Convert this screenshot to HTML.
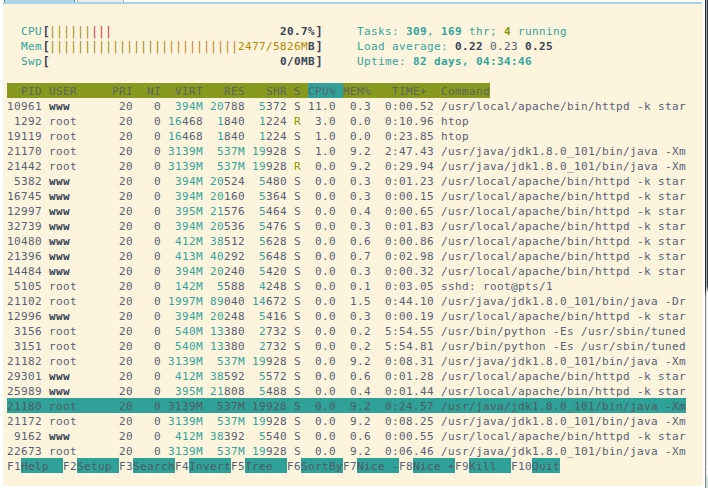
<!DOCTYPE html>
<html><head><meta charset="utf-8"><title>htop</title><style>
html,body{margin:0;padding:0;background:#fff;}
body{width:708px;height:488px;position:relative;overflow:hidden;}
#term{position:absolute;left:3px;top:4px;width:700px;height:481.5px;background:#fcf4dd;}
.ln{position:absolute;left:7px;height:15px;line-height:17px;white-space:pre;
 font-family:"DejaVu Sans Mono","Liberation Mono",monospace;font-size:11px;letter-spacing:0.3774px;color:#556275;
 font-kerning:none;font-variant-ligatures:none;}
.ln span{display:inline-block;height:15px;vertical-align:top;}
.c{color:#33a59c} .g{color:#859900} .y{color:#b58900}
.b{color:#384658;font-weight:bold}
.k{transform:translate(0.75px,1px) scale(1.1,1.05);transform-origin:50% 14px}
.cb{color:#33a59c;font-weight:bold} .gb{color:#859900;font-weight:bold}
.bg,.br,.by{position:relative;left:0.25px;transform:translateY(0.25px) scaleY(1.1);transform-origin:50% 9px}
.bg{color:#988812} .br{color:#d8302c} .by{color:#c07c21}
.hd{background:#87991f;color:#60645a} .hs{background:#2fa198;color:#566470}
.sel{background:#2fa198;color:#4e5c66}
.fk{background:#2fa198;color:#4e5c66}
#t1{position:absolute;left:5px;top:0;width:69px;height:2px;background:#add8e6}
#t1a{position:absolute;left:4px;top:0;width:1px;height:2px;background:#6688ba}
#t1b{position:absolute;left:74px;top:0;width:1px;height:2px;background:#5b82b8}
#t2{position:absolute;left:77px;top:0;width:47px;height:2px;background:#ececec;border-left:1px solid #aaa;border-right:1px solid #aaa;box-sizing:border-box}
#strip{position:absolute;left:3px;top:2px;width:699px;height:2px;background:#a9d6e7}
#rb1{position:absolute;left:705px;top:0;width:1px;height:488px;background:linear-gradient(to bottom,#20242c 0,#20242c 290px,#868686 297px)}
#rb1b{position:absolute;left:706px;top:0;width:1px;height:488px;background:linear-gradient(to bottom,#a0a5ae 0,#a0a5ae 286px,#e2e2e2 293px)}
#rb2{position:absolute;left:707px;top:0;width:1px;height:488px;background:linear-gradient(to bottom,#3a4450 0,#3a4450 286px,#fff 293px)}
#rb3{position:absolute;left:706px;top:471px;width:2px;height:17px;background:linear-gradient(to bottom,rgba(255,255,255,1) 0,rgba(255,255,255,0) 45%),linear-gradient(to right,#b4d4c8,#e4f2ec)}
</style></head>
<body>
<div id="t1"></div><div id="t1a"></div><div id="t1b"></div><div id="t2"></div><div id="strip"></div>
<div id="term"></div>
<div id="rb1"></div><div id="rb1b"></div><div id="rb2"></div><div id="rb3"></div>
<div class="ln" style="top:8px"></div>
<div class="ln" style="top:23px">  <span class="c">CPU</span><span class="b k">[</span><span class="bg">||||||</span><span class="br">|||</span>                        <span class="b">20.7%</span><span class="b k">]</span>     <span class="c">Tasks: </span><span class="cb">309</span><span class="c">, </span><span class="cb">169</span><span class="c"> thr; </span><span class="gb">4</span><span class="c"> running</span></div>
<div class="ln" style="top:38px">  <span class="c">Mem</span><span class="b k">[</span><span class="bg">|||||||||||||||||</span><span class="by">||||||||||</span><span class="y">2477/5826M</span><span class="b">B</span><span class="b k">]</span>     <span class="c">Load average: </span><span class="b">0.22</span> 0.23 <span class="b">0.25</span></div>
<div class="ln" style="top:53px">  <span class="c">Swp</span><span class="b k">[</span>                                 <span class="b">0/0MB</span><span class="b k">]</span>     <span class="c">Uptime: </span><span class="cb">82 days, 04:34:46</span></div>
<div class="ln" style="top:68px"></div>
<div class="ln" style="top:83px"><span class="hd">  PID USER     PRI  NI  VIRT   RES   SHR S <span class="hs">CPU% </span>MEM%   TIME+  Command</span></div>
<div class="ln" style="top:98px">10961 <span class="b">www</span>       20   0  <span class="c">394M</span> <span class="c">20</span>788  <span class="c">5</span>372 S 11.0  0.3  0:00.52 /usr/local/apache/bin/httpd -k star</div>
<div class="ln" style="top:113px"> 1292 root      20   0 <span class="c">16</span>468  <span class="c">1</span>840  <span class="c">1</span>224 <span class="g">R</span>  3.0  0.0  0:10.96 htop</div>
<div class="ln" style="top:128px">19119 root      20   0 <span class="c">16</span>468  <span class="c">1</span>840  <span class="c">1</span>224 S  1.0  0.0  0:23.85 htop</div>
<div class="ln" style="top:143px">21170 root      20   0 <span class="c">3139M</span>  <span class="c">537M</span> <span class="c">19</span>928 S  1.0  9.2  2:47.43 /usr/java/jdk1.8.0_101/bin/java -Xm</div>
<div class="ln" style="top:158px">21442 root      20   0 <span class="c">3139M</span>  <span class="c">537M</span> <span class="c">19</span>928 <span class="g">R</span>  0.0  9.2  0:29.94 /usr/java/jdk1.8.0_101/bin/java -Xm</div>
<div class="ln" style="top:173px"> 5382 <span class="b">www</span>       20   0  <span class="c">394M</span> <span class="c">20</span>524  <span class="c">5</span>480 S  0.0  0.3  0:01.23 /usr/local/apache/bin/httpd -k star</div>
<div class="ln" style="top:188px">16745 <span class="b">www</span>       20   0  <span class="c">394M</span> <span class="c">20</span>160  <span class="c">5</span>364 S  0.0  0.3  0:00.15 /usr/local/apache/bin/httpd -k star</div>
<div class="ln" style="top:203px">12997 <span class="b">www</span>       20   0  <span class="c">395M</span> <span class="c">21</span>576  <span class="c">5</span>464 S  0.0  0.4  0:00.65 /usr/local/apache/bin/httpd -k star</div>
<div class="ln" style="top:218px">32739 <span class="b">www</span>       20   0  <span class="c">394M</span> <span class="c">20</span>536  <span class="c">5</span>476 S  0.0  0.3  0:01.83 /usr/local/apache/bin/httpd -k star</div>
<div class="ln" style="top:233px">10480 <span class="b">www</span>       20   0  <span class="c">412M</span> <span class="c">38</span>512  <span class="c">5</span>628 S  0.0  0.6  0:00.86 /usr/local/apache/bin/httpd -k star</div>
<div class="ln" style="top:248px">21396 <span class="b">www</span>       20   0  <span class="c">413M</span> <span class="c">40</span>292  <span class="c">5</span>648 S  0.0  0.7  0:02.98 /usr/local/apache/bin/httpd -k star</div>
<div class="ln" style="top:263px">14484 <span class="b">www</span>       20   0  <span class="c">394M</span> <span class="c">20</span>240  <span class="c">5</span>420 S  0.0  0.3  0:00.32 /usr/local/apache/bin/httpd -k star</div>
<div class="ln" style="top:278px"> 5105 root      20   0  <span class="c">142M</span>  <span class="c">5</span>588  <span class="c">4</span>248 S  0.0  0.1  0:03.05 sshd: root@pts/1</div>
<div class="ln" style="top:293px">21102 root      20   0 <span class="c">1997M</span> <span class="c">89</span>040 <span class="c">14</span>672 S  0.0  1.5  0:44.10 /usr/java/jdk1.8.0_101/bin/java -Dr</div>
<div class="ln" style="top:308px">12996 <span class="b">www</span>       20   0  <span class="c">394M</span> <span class="c">20</span>248  <span class="c">5</span>416 S  0.0  0.3  0:00.19 /usr/local/apache/bin/httpd -k star</div>
<div class="ln" style="top:323px"> 3156 root      20   0  <span class="c">540M</span> <span class="c">13</span>380  <span class="c">2</span>732 S  0.0  0.2  5:54.55 /usr/bin/python -Es /usr/sbin/tuned</div>
<div class="ln" style="top:338px"> 3151 root      20   0  <span class="c">540M</span> <span class="c">13</span>380  <span class="c">2</span>732 S  0.0  0.2  5:54.81 /usr/bin/python -Es /usr/sbin/tuned</div>
<div class="ln" style="top:353px">21182 root      20   0 <span class="c">3139M</span>  <span class="c">537M</span> <span class="c">19</span>928 S  0.0  9.2  0:08.31 /usr/java/jdk1.8.0_101/bin/java -Xm</div>
<div class="ln" style="top:368px">29301 <span class="b">www</span>       20   0  <span class="c">412M</span> <span class="c">38</span>592  <span class="c">5</span>572 S  0.0  0.6  0:01.28 /usr/local/apache/bin/httpd -k star</div>
<div class="ln" style="top:383px">25989 <span class="b">www</span>       20   0  <span class="c">395M</span> <span class="c">21</span>808  <span class="c">5</span>488 S  0.0  0.4  0:01.44 /usr/local/apache/bin/httpd -k star</div>
<div class="ln" style="top:398px"><span class="sel">21180 root      20   0 3139M  537M 19928 S  0.0  9.2  0:24.57 /usr/java/jdk1.8.0_101/bin/java -Xm</span></div>
<div class="ln" style="top:413px">21172 root      20   0 <span class="c">3139M</span>  <span class="c">537M</span> <span class="c">19</span>928 S  0.0  9.2  0:08.25 /usr/java/jdk1.8.0_101/bin/java -Xm</div>
<div class="ln" style="top:428px"> 9162 <span class="b">www</span>       20   0  <span class="c">412M</span> <span class="c">38</span>392  <span class="c">5</span>540 S  0.0  0.6  0:00.55 /usr/local/apache/bin/httpd -k star</div>
<div class="ln" style="top:443px">22673 root      20   0 <span class="c">3139M</span>  <span class="c">537M</span> <span class="c">19</span>928 S  0.0  9.2  0:06.46 /usr/java/jdk1.8.0_101/bin/java -Xm</div>
<div class="ln" style="top:458px">F1<span class="fk">Help  </span>F2<span class="fk">Setup </span>F3<span class="fk">Search</span>F4<span class="fk">Invert</span>F5<span class="fk">Tree  </span>F6<span class="fk">SortBy</span>F7<span class="fk">Nice -</span>F8<span class="fk">Nice +</span>F9<span class="fk">Kill  </span>F10<span class="fk">Quit</span></div>
</body></html>
